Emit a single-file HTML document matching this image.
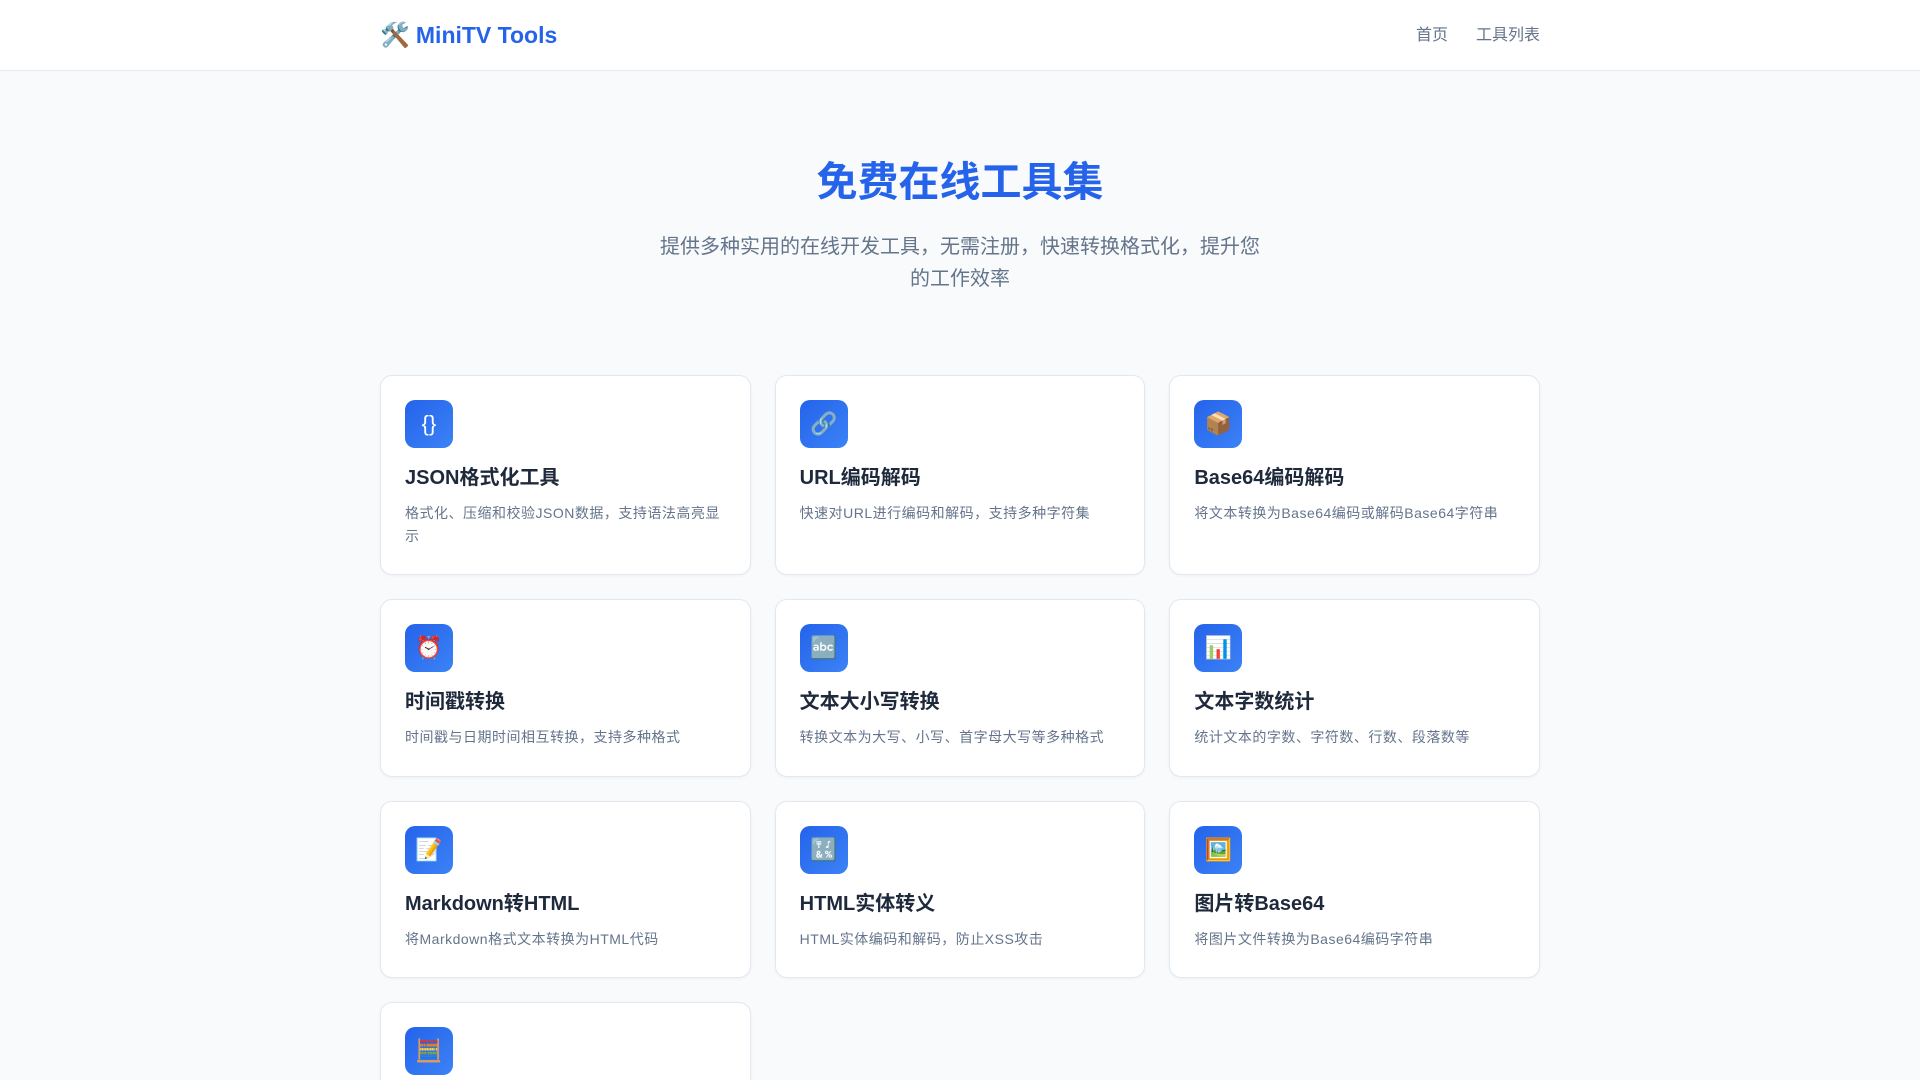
<!DOCTYPE html>
<html><head><meta charset="utf-8">
<style>
*{box-sizing:border-box;margin:0;padding:0}
html,body{width:1920px;height:1080px;overflow:hidden}
body{background:#f8fafc;font-family:"Liberation Sans","Noto Sans CJK SC",sans-serif;}
header{height:71px;background:#fff;border-bottom:1px solid #e5e9f0;}
.hin{width:1160px;margin:0 auto;display:flex;align-items:center;justify-content:space-between;height:70px;}
.logo{font-size:23px;font-weight:bold;color:#2563eb;display:flex;align-items:center;gap:6px}
nav{position:relative;top:-2px}
nav a{color:#64748b;font-size:16px;margin-left:28px;text-decoration:none}
.hero{text-align:center;padding-top:86px}
.hero h1{font-size:41px;color:#2563eb;font-weight:bold;line-height:50px}
.hero p{width:610px;margin:24px auto 0;font-size:20px;line-height:32px;color:#64748b}
.grid{width:1160px;margin:80px auto 0;display:grid;grid-template-columns:repeat(3,1fr);gap:24px}
.card{background:#fff;border:1px solid #e2e8f0;border-radius:12px;padding:24px 24px 27px;box-shadow:0 1px 3px rgba(0,0,0,.04)}
.ic{width:48px;height:48px;border-radius:10px;background:linear-gradient(135deg,#2563eb,#3b82f6);color:#fff;display:flex;align-items:center;justify-content:center;font-size:22px}
.card h3{margin-top:16px;font-size:20px;line-height:28px;color:#1e293b;font-weight:bold}
.card p{margin-top:10px;font-size:14px;line-height:22.5px;color:#64748b;letter-spacing:0.5px}
</style></head><body>
<header><div class="hin"><div class="logo"><span style="font-size:24px">🛠️</span>MiniTV Tools</div><nav><a>首页</a><a>工具列表</a></nav></div></header>
<div class="hero"><h1>免费在线工具集</h1><p>提供多种实用的在线开发工具，无需注册，快速转换格式化，提升您的工作效率</p></div>
<div class="grid">
<div class="card"><div class="ic">{}</div><h3>JSON格式化工具</h3><p>格式化、压缩和校验JSON数据，支持语法高亮显示</p></div>
<div class="card"><div class="ic">🔗</div><h3>URL编码解码</h3><p>快速对URL进行编码和解码，支持多种字符集</p></div>
<div class="card"><div class="ic">📦</div><h3>Base64编码解码</h3><p>将文本转换为Base64编码或解码Base64字符串</p></div>
<div class="card"><div class="ic">⏰</div><h3>时间戳转换</h3><p>时间戳与日期时间相互转换，支持多种格式</p></div>
<div class="card"><div class="ic">🔤</div><h3>文本大小写转换</h3><p>转换文本为大写、小写、首字母大写等多种格式</p></div>
<div class="card"><div class="ic">📊</div><h3>文本字数统计</h3><p>统计文本的字数、字符数、行数、段落数等</p></div>
<div class="card"><div class="ic">📝</div><h3>Markdown转HTML</h3><p>将Markdown格式文本转换为HTML代码</p></div>
<div class="card"><div class="ic">🔣</div><h3>HTML实体转义</h3><p>HTML实体编码和解码，防止XSS攻击</p></div>
<div class="card"><div class="ic">🖼️</div><h3>图片转Base64</h3><p>将图片文件转换为Base64编码字符串</p></div>
<div class="card"><div class="ic">🧮</div><h3>计算器</h3><p>在线计算工具</p></div>
</div>
</body></html>
